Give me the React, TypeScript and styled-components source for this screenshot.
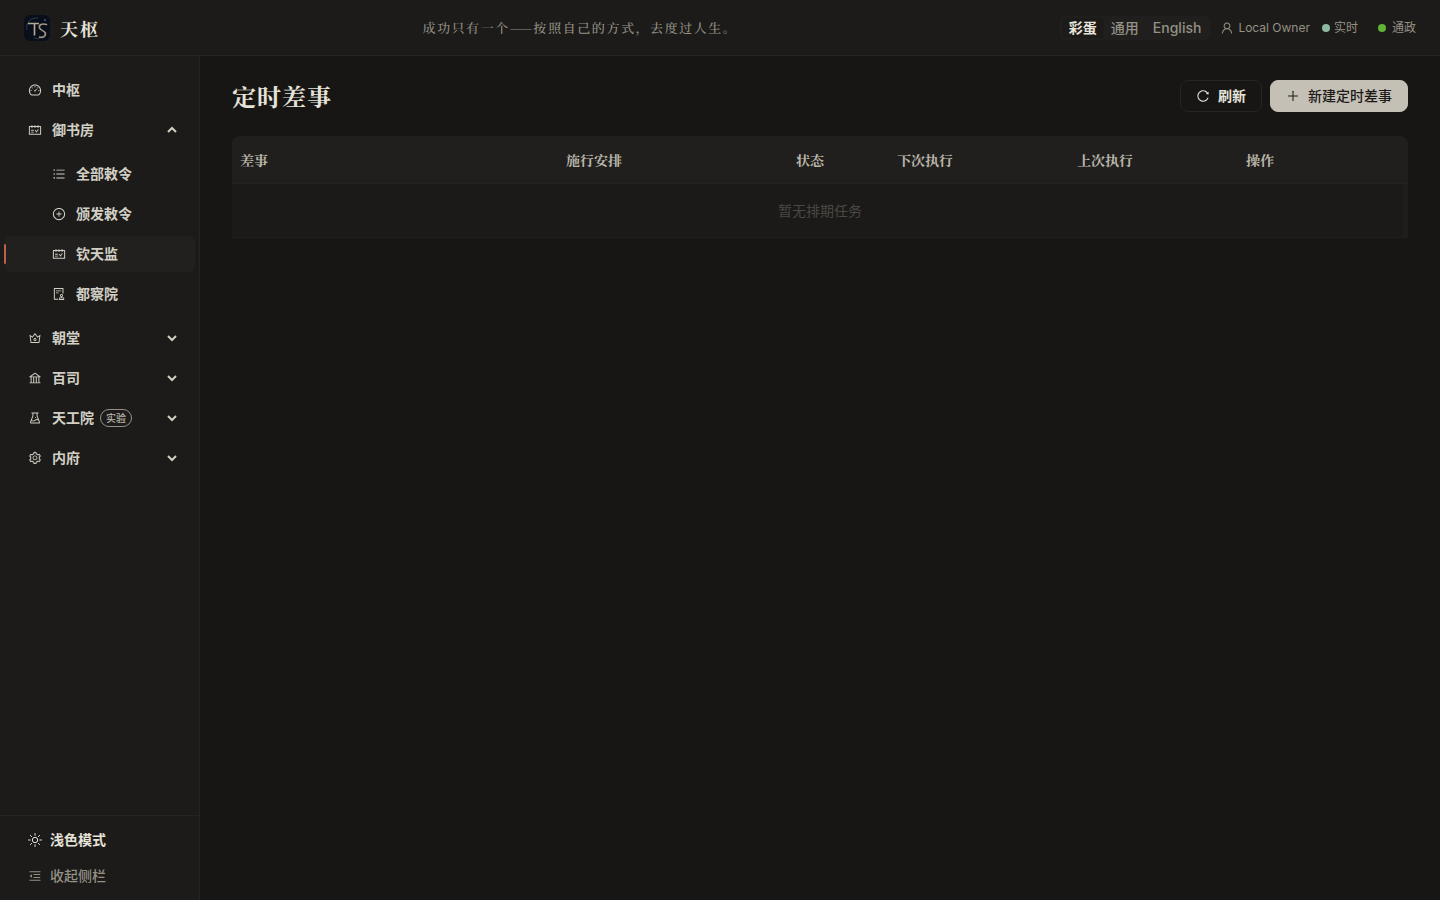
import React from 'react';
import styled, { createGlobalStyle, css } from 'styled-components';
import type { IconType } from 'react-icons';
import {
  AiOutlineAudit,
  AiOutlineBank,
  AiOutlineCrown,
  AiOutlineDashboard,
  AiOutlineExperiment,
  AiOutlineMenuFold,
  AiOutlinePlus,
  AiOutlinePlusCircle,
  AiOutlineReload,
  AiOutlineSchedule,
  AiOutlineSetting,
  AiOutlineUnorderedList,
  AiOutlineUser,
} from 'react-icons/ai';

const serif = '"Songti SC", "Noto Serif SC", "Noto Serif CJK SC", "Noto Sans CJK SC", serif';
const sans = 'Inter, "Noto Sans CJK SC", sans-serif';

const color = {
  page: '#171614',
  panel: '#1c1b19',
  raised: '#21201e',
  line: '#252422',
  text: '#d2cfc5',
  bright: '#e6e3d9',
  muted: '#949085',
  faint: '#4a4843',
  accent: '#c0604a',
};

const GlobalStyle = createGlobalStyle`
  *, *::before, *::after { box-sizing: border-box; }
  body {
    margin: 0;
    background: ${color.page};
    color: ${color.text};
    font-family: ${sans};
    font-size: 14px;
    line-height: 20px;
  }
  button { font: inherit; color: inherit; cursor: pointer; }
`;

const Shell = styled.div`
  display: flex;
  flex-direction: column;
  min-height: 100vh;
`;

const Header = styled.header`
  display: flex;
  align-items: center;
  justify-content: space-between;
  height: 56px;
  padding: 0 24px;
  background: ${color.panel};
  border-bottom: 1px solid ${color.line};
`;

const Brand = styled.a`
  display: flex;
  align-items: center;
  gap: 10px;
  color: ${color.bright};
  text-decoration: none;
`;

const BrandName = styled.span`
  font-family: ${serif};
  font-size: 18px;
  font-weight: 700;
  letter-spacing: 2px;
  line-height: 28px;
`;

const Motto = styled.p`
  margin: 0;
  color: ${color.muted};
  font-family: ${serif};
  font-size: 13px;
  font-weight: 500;
  letter-spacing: 0.12em;
`;

const HeaderTools = styled.div`
  display: flex;
  align-items: center;
  color: ${color.muted};
  font-size: 12px;
`;

const Segmented = styled.div`
  display: flex;
  padding: 2px;
  margin-right: 10px;
  border-radius: 6px;
  background: #201f1d;
`;

const Segment = styled.button<{ $on?: boolean }>`
  padding: 0 7px;
  border: 0;
  border-radius: 4px;
  background: ${(p) => (p.$on ? color.panel : 'transparent')};
  color: ${(p) => (p.$on ? color.bright : color.muted)};
  font-size: 14px;
  font-weight: ${(p) => (p.$on ? 600 : 500)};
`;

const UserTag = styled.span`
  display: flex;
  align-items: center;
  gap: 4px;
`;

const Status = styled.span<{ $dot: string; $gap: number; $before: number }>`
  display: flex;
  align-items: center;
  gap: ${(p) => p.$gap}px;
  margin-left: ${(p) => p.$before}px;

  &::before {
    content: '';
    width: 8px;
    height: 8px;
    border-radius: 50%;
    background: ${(p) => p.$dot};
  }
`;

const Body = styled.div`
  display: flex;
  flex: 1;
`;

const Sidebar = styled.aside`
  display: flex;
  flex-direction: column;
  flex: none;
  width: 200px;
  background: ${color.panel};
  border-right: 1px solid ${color.line};
`;

const Nav = styled.nav`
  display: flex;
  flex: 1;
  flex-direction: column;
  gap: 4px;
  padding: 16px 4px;
`;

const SubNav = styled.div`
  display: flex;
  flex-direction: column;
  gap: 4px;
  padding: 4px 0;
`;

const NavItem = styled.button<{ $sub?: boolean; $active?: boolean }>`
  position: relative;
  display: flex;
  align-items: center;
  gap: 10px;
  width: 100%;
  height: 36px;
  padding: 0 18px 0 ${(p) => (p.$sub ? 48 : 24)}px;
  border: 0;
  border-radius: 6px;
  background: transparent;
  font-weight: 600;
  text-align: left;

  ${(p) =>
    p.$active &&
    css`
      background: ${color.raised};

      &::before {
        content: '';
        position: absolute;
        top: 8px;
        left: 0;
        width: 2px;
        height: 20px;
        border-radius: 1px;
        background: ${color.accent};
      }
    `}
`;

const Badge = styled.span`
  padding: 0 5px;
  margin-left: -4px;
  border: 1px solid ${color.muted};
  border-radius: 9px;
  color: #bab6aa;
  font-size: 10px;
  font-weight: 500;
  line-height: 16px;
`;

const Arrow = styled.svg`
  width: 10px;
  height: 10px;
  margin-left: auto;
`;

const SidebarFooter = styled.div`
  padding: 6px 4px;
  border-top: 1px solid ${color.line};
`;

const FooterItem = styled(NavItem)<{ $dim?: boolean }>`
  gap: 8px;
  color: ${(p) => (p.$dim ? color.muted : color.bright)};
  font-weight: ${(p) => (p.$dim ? 500 : 600)};
`;

const Main = styled.main`
  flex: 1;
  min-width: 0;
  padding: 24px 32px;
`;

const TitleBar = styled.div`
  display: flex;
  align-items: center;
  justify-content: space-between;
  margin-bottom: 24px;
`;

const Title = styled.h1`
  margin: 0;
  color: ${color.bright};
  font-family: ${serif};
  font-size: 24px;
  font-weight: 700;
  letter-spacing: 1px;
  line-height: 32px;
`;

const Actions = styled.div`
  display: flex;
  gap: 8px;
`;

const Button = styled.button<{ $primary?: boolean }>`
  display: flex;
  align-items: center;
  gap: 8px;
  height: 32px;
  padding: 0 15px;
  border: 1px solid ${(p) => (p.$primary ? '#c4c0b6' : '#262523')};
  border-radius: 8px;
  background: ${(p) => (p.$primary ? '#c4c0b6' : 'transparent')};
  color: ${(p) => (p.$primary ? '#1c1b19' : color.bright)};
  font-weight: ${(p) => (p.$primary ? 500 : 600)};
`;

const Table = styled.table`
  width: 100%;
  border-spacing: 0;
  table-layout: fixed;
  border-radius: 8px 8px 0 0;
  overflow: hidden;
`;

const HeadCell = styled.th<{ $width?: number }>`
  width: ${(p) => (p.$width ? `${p.$width}px` : 'auto')};
  height: 48px;
  padding: 0 8px;
  border-bottom: 1px solid #242321;
  background: #201f1d;
  color: #bcb8ac;
  font-family: ${serif};
  font-weight: 700;
  text-align: left;
`;

const EmptyCell = styled.td`
  height: 54px;
  padding: 0 8px;
  border-bottom: 1px solid #201f1d;
  background: #1b1a18;
  box-shadow: inset -5px 0 0 #1e1d1b;
  color: ${color.faint};
  text-align: center;
`;

const Logo = () => (
  <svg width="26" height="26" viewBox="0 0 26 26" fill="none" aria-hidden="true">
    <rect width="26" height="26" rx="6" fill="#090e1b" />
    <path d="M3 15C1 8 7 2 14 3M22 17C20 22 15 25 10 23" stroke="#2f3848" />
    <path d="M4 8.500h11M10.500 9v11.500" stroke="#b5aa96" strokeWidth="1.600" />
    <path
      d="M22.500 9.500C18 8 14.500 10 15.500 13c1 3 6 2.500 6 6 0 3-3 4-6 3"
      stroke="#a3967f"
      strokeWidth="1.600"
      strokeLinecap="round"
    />
    <circle cx="21" cy="5" r="1" fill="#4e5a70" />
  </svg>
);

const SunIcon = () => (
  <svg width="14" height="14" viewBox="0 0 14 14" fill="none" stroke="currentColor" aria-hidden="true">
    <circle cx="7" cy="7" r="2.700" />
    <path
      d="M7 .5v1.700M7 11.800v1.700M.5 7h1.700M11.800 7h1.700M2.400 2.400l1.200 1.200M10.400 10.400l1.200 1.200M2.400 11.600l1.200-1.200M10.400 3.600l1.200-1.200"
      strokeLinecap="round"
    />
  </svg>
);

const Chevron = ({ up }: { up?: boolean }) => (
  <Arrow viewBox="0 0 10 10" fill="none" stroke="currentColor" strokeWidth="2" aria-hidden="true">
    <path d={up ? 'M1 7l4-4 4 4' : 'M1 3l4 4 4-4'} />
  </Arrow>
);

interface Entry {
  label: string;
  icon: IconType;
  badge?: string;
  active?: boolean;
  children?: Entry[];
  collapsed?: boolean;
}

const entries: Entry[] = [
  { label: '中枢', icon: AiOutlineDashboard },
  {
    label: '御书房',
    icon: AiOutlineSchedule,
    children: [
      { label: '全部敕令', icon: AiOutlineUnorderedList },
      { label: '颁发敕令', icon: AiOutlinePlusCircle },
      { label: '钦天监', icon: AiOutlineSchedule, active: true },
      { label: '都察院', icon: AiOutlineAudit },
    ],
  },
  { label: '朝堂', icon: AiOutlineCrown, collapsed: true },
  { label: '百司', icon: AiOutlineBank, collapsed: true },
  { label: '天工院', icon: AiOutlineExperiment, badge: '实验', collapsed: true },
  { label: '内府', icon: AiOutlineSetting, collapsed: true },
];

const columns: { label: string; width?: number }[] = [
  { label: '差事' },
  { label: '施行安排', width: 230 },
  { label: '状态', width: 101 },
  { label: '下次执行', width: 180 },
  { label: '上次执行', width: 169 },
  { label: '操作', width: 170 },
];

export default function App() {
  return (
    <Shell>
      <GlobalStyle />
      <Header>
        <Brand href="#">
          <Logo />
          <BrandName>天枢</BrandName>
        </Brand>
        <Motto>成功只有一个——按照自己的方式，去度过人生。</Motto>
        <HeaderTools>
          <Segmented>
            <Segment $on>彩蛋</Segment>
            <Segment>通用</Segment>
            <Segment>English</Segment>
          </Segmented>
          <UserTag>
            <AiOutlineUser size={14} />
            Local Owner
          </UserTag>
          <Status $dot="#8fb8a0" $gap={4} $before={12}>
            实时
          </Status>
          <Status $dot="#5fb336" $gap={6} $before={20}>
            通政
          </Status>
        </HeaderTools>
      </Header>
      <Body>
        <Sidebar>
          <Nav>
            {entries.map(({ icon: Icon, ...entry }) => (
              <React.Fragment key={entry.label}>
                <NavItem aria-expanded={entry.children ? true : undefined}>
                  <Icon size={14} />
                  {entry.label}
                  {entry.badge && <Badge>{entry.badge}</Badge>}
                  {entry.children && <Chevron up />}
                  {entry.collapsed && <Chevron />}
                </NavItem>
                {entry.children && (
                  <SubNav>
                    {entry.children.map(({ icon: SubIcon, ...child }) => (
                      <NavItem key={child.label} $sub $active={child.active}>
                        <SubIcon size={14} />
                        {child.label}
                      </NavItem>
                    ))}
                  </SubNav>
                )}
              </React.Fragment>
            ))}
          </Nav>
          <SidebarFooter>
            <FooterItem>
              <SunIcon />
              浅色模式
            </FooterItem>
            <FooterItem $dim>
              <AiOutlineMenuFold size={14} />
              收起侧栏
            </FooterItem>
          </SidebarFooter>
        </Sidebar>
        <Main>
          <TitleBar>
            <Title>定时差事</Title>
            <Actions>
              <Button>
                <AiOutlineReload size={14} />
                刷新
              </Button>
              <Button $primary>
                <AiOutlinePlus size={14} />
                新建定时差事
              </Button>
            </Actions>
          </TitleBar>
          <Table>
            <thead>
              <tr>
                {columns.map((column) => (
                  <HeadCell key={column.label} scope="col" $width={column.width}>
                    {column.label}
                  </HeadCell>
                ))}
              </tr>
            </thead>
            <tbody>
              <tr>
                <EmptyCell colSpan={columns.length}>暂无排期任务</EmptyCell>
              </tr>
            </tbody>
          </Table>
        </Main>
      </Body>
    </Shell>
  );
}
